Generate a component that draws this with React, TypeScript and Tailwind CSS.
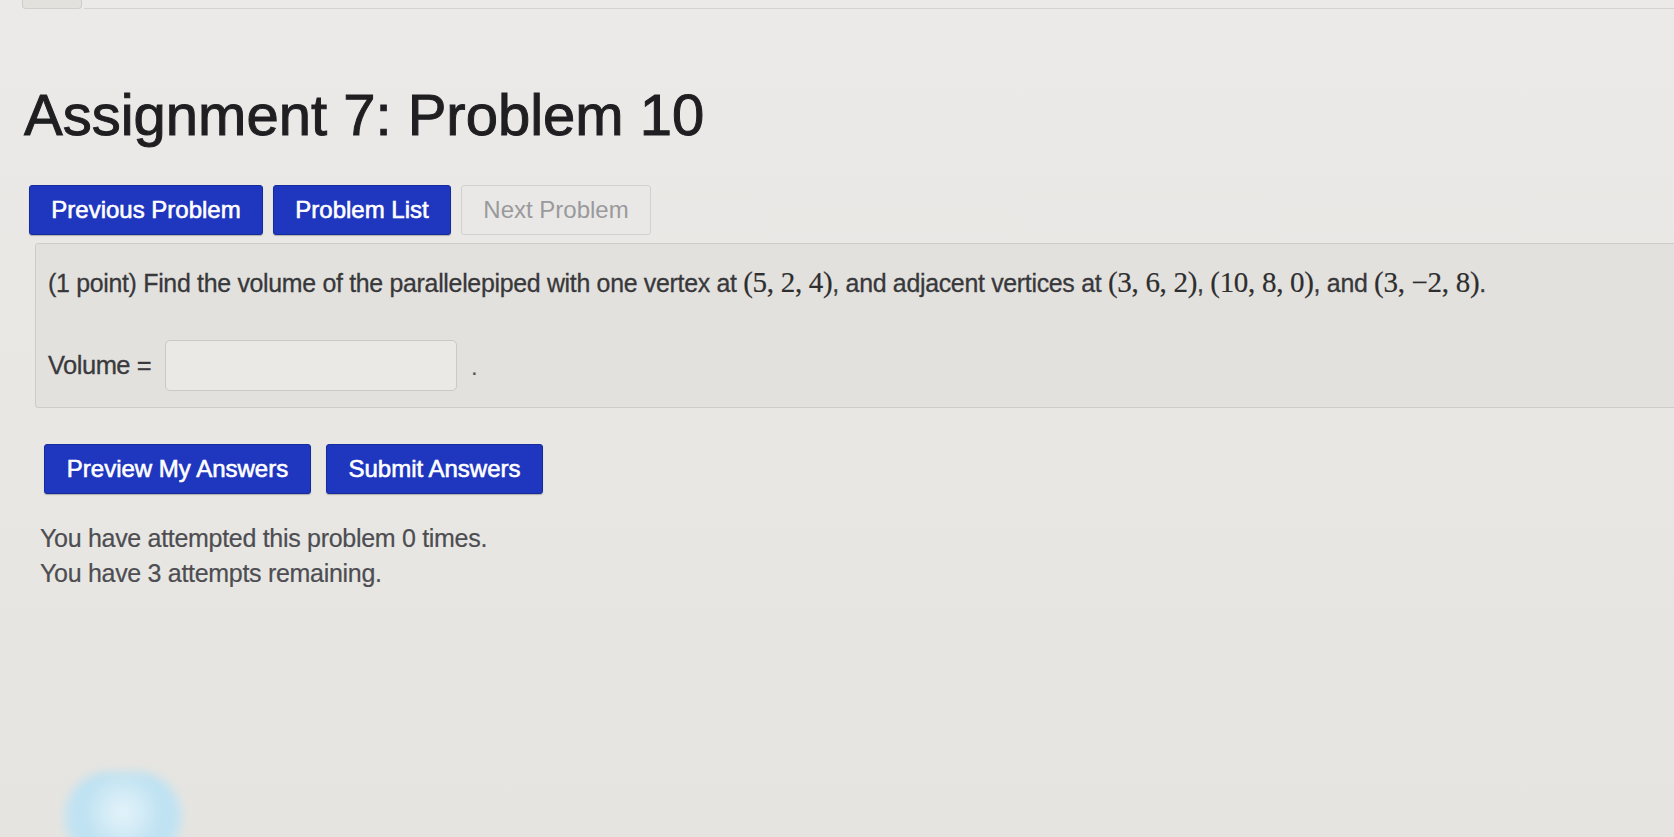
import React from "react";

const Math = ({ children }: { children: React.ReactNode }) => (
  <span className="font-['Liberation_Serif',serif] text-[29px] text-[#2e2e2e] [-webkit-text-stroke:0.2px_#2e2e2e]">{children}</span>
);

const blueBtn =
  "h-[50px] rounded-[3px] border border-[#162c9c] bg-[#1f36bf] text-[24px] tracking-[0px] text-white [-webkit-text-stroke:0.6px_#ffffff] shadow-[0_1px_1px_rgba(0,0,0,0.25)]";

export default function App() {
  return (
    <div className="relative w-full h-[837px] overflow-hidden bg-gradient-to-b from-[#ebeae8] to-[#e5e4e0] font-['Liberation_Sans',Arial,sans-serif]">
      {/* top strip */}
      <div className="flex h-[9px]">
        <div className="ml-[22px] w-[60px] rounded-b-[4px] border border-t-0 border-[#cfcecb] bg-[#e2e1de]" />
        <div className="ml-[2px] flex-1 border-b border-[#d3d2cf]" />
      </div>

      <h1 className="ml-[24px] mt-[77px] text-[58px] leading-[58px] text-[#1f1f22] tracking-[0px] [-webkit-text-stroke:1px_#1f1f22]">
        Assignment 7: Problem 10
      </h1>

      <div className="ml-[29px] mt-[41px] flex gap-[10px]">
        <button className={`${blueBtn} w-[234px]`}>Previous Problem</button>
        <button className={`${blueBtn} w-[178px]`}>Problem List</button>
        <button className="h-[50px] w-[190px] rounded-[3px] border border-[#d2d1ce] bg-[#e9e8e6] text-[24px] tracking-[0px] text-[#9a9a9c]">
          Next Problem
        </button>
      </div>

      <div className="ml-[35px] -mr-[20px] mt-[8px] rounded-[3px] border border-[#cdccc9] bg-[#e2e1de] pl-[12px] pt-[21px] pb-[16px]">
        <p className="text-[24.9px] leading-[34px] tracking-[-0.3px] text-[#38383b] [-webkit-text-stroke:0.3px_#38383b]">
          (1 point) Find the volume of the parallelepiped with one vertex at <Math>(5, 2, 4)</Math>, and adjacent vertices at{" "}
          <Math>(3, 6, 2)</Math>, <Math>(10, 8, 0)</Math>, and <Math>(3, −2, 8)</Math>.
        </p>
        <div className="mt-[40px] flex items-end">
          <span className="mb-[12px] text-[25.5px] leading-[28px] tracking-[-0.5px] text-[#3a3a3d] [-webkit-text-stroke:0.3px_#3a3a3d]">Volume =</span>
          <div className="ml-[14px] h-[51px] w-[292px] rounded-[5px] border border-[#cac9c6] bg-[#eae9e6]" />
          <span className="mb-[12px] ml-[14px] text-[24px] leading-[24px] text-[#555]">.</span>
        </div>
      </div>

      <div className="ml-[44px] mt-[36px] flex gap-[15px]">
        <button className={`${blueBtn} w-[267px]`}>Preview My Answers</button>
        <button className={`${blueBtn} w-[217px]`}>Submit Answers</button>
      </div>

      <div className="ml-[40px] mt-[27px] text-[25px] leading-[35px] tracking-[-0.3px] text-[#4d4d52] [-webkit-text-stroke:0.2px_#4d4d52]">
        <div>You have attempted this problem 0 times.</div>
        <div>You have 3 attempts remaining.</div>
      </div>

      {/* glare reflection */}
      <div className="pointer-events-none absolute left-[64px] top-[772px] h-[90px] w-[118px] rounded-full bg-[radial-gradient(circle_at_50%_45%,#e6f6fd_0%,#b9e1f4_55%,#cfe9f3_100%)] blur-[5px] opacity-90" />
    </div>
  );
}
